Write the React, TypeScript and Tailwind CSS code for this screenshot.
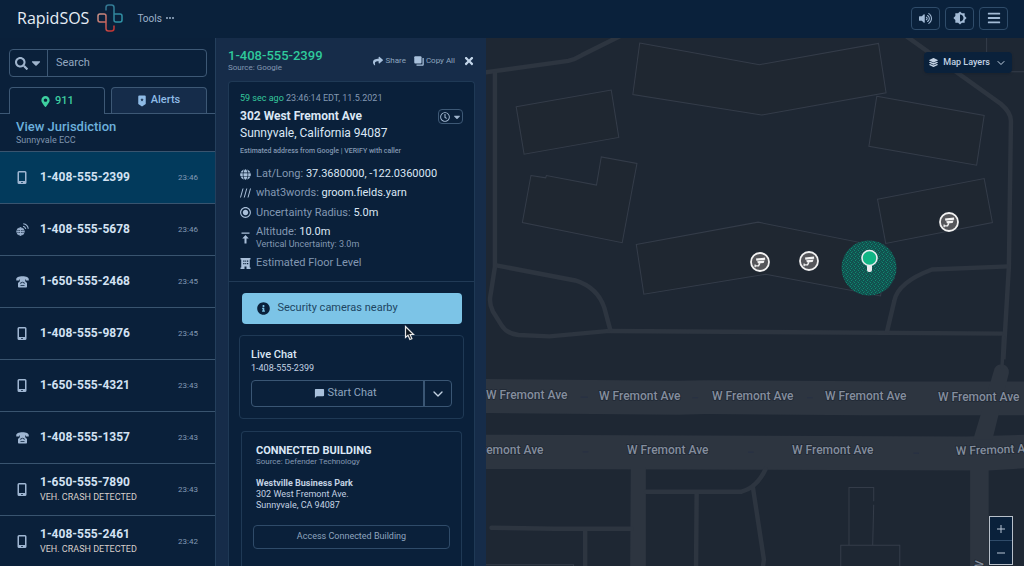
import { useState } from "react"
import {
  FaBars,
  FaCaretDown,
  FaGlobe,
  FaInfoCircle,
  FaLayerGroup,
  FaMapMarkerAlt,
  FaRegClock,
  FaSearch,
  FaShare,
  FaTimes,
  FaVolumeUp,
} from "react-icons/fa"
import { MdBrightness6, MdChatBubble, MdRadioButtonChecked } from "react-icons/md"
import { FiChevronDown } from "react-icons/fi"

type CallKind = "mobile" | "landline" | "voip"

type Call = {
  phone: string
  time: string
  kind: CallKind
  note?: string
}

const calls: Call[] = [
  { phone: "1-408-555-2399", time: "23:46", kind: "mobile" },
  { phone: "1-408-555-5678", time: "23:46", kind: "voip" },
  { phone: "1-650-555-2468", time: "23:45", kind: "landline" },
  { phone: "1-408-555-9876", time: "23:45", kind: "mobile" },
  { phone: "1-650-555-4321", time: "23:43", kind: "mobile" },
  { phone: "1-408-555-1357", time: "23:43", kind: "landline" },
  {
    phone: "1-650-555-7890",
    time: "23:43",
    kind: "mobile",
    note: "VEH. CRASH DETECTED",
  },
  {
    phone: "1-408-555-2461",
    time: "23:42",
    kind: "mobile",
    note: "VEH. CRASH DETECTED",
  },
]

const LogoMark = () => (
  <svg width="28" height="30" viewBox="0 0 28 30" fill="none" strokeWidth="1.500">
    <defs>
      <linearGradient id="warm" x1="0" y1="0" x2="1" y2="1">
        <stop offset="0" stopColor="#c9958a" />
        <stop offset="1" stopColor="#c3302f" />
      </linearGradient>
      <linearGradient id="cool" x1="0" y1="0" x2="1" y2="1">
        <stop offset="0" stopColor="#33748f" />
        <stop offset="1" stopColor="#2f95a8" />
      </linearGradient>
    </defs>
    <path
      stroke="url(#warm)"
      d="M10 19H4a2 2 0 0 1-2-2V13a2 2 0 0 1 2-2H8a2 2 0 0 1 2 2V25.500a2.500 2.500 0 0 0 2.500 2.500H15.500a2.500 2.500 0 0 0 2.500-2.500V22.500"
    />
    <path
      stroke="url(#cool)"
      d="M10 7.500V4.500A2.500 2.500 0 0 1 12.500 2H15.500a2.500 2.500 0 0 1 2.500 2.500V17a2 2 0 0 0 2 2H24a2 2 0 0 0 2-2V13a2 2 0 0 0-2-2H18"
    />
  </svg>
)

const MobileIcon = () => (
  <svg width="10" height="13" viewBox="0 0 20 26" fill="currentColor">
    <path
      fillRule="evenodd"
      d="M4 0h12a3 3 0 0 1 3 3v20a3 3 0 0 1-3 3H4a3 3 0 0 1-3-3V3a3 3 0 0 1 3-3zm0 3v17h12V3zm4.500 18.800v2h3v-2z"
    />
  </svg>
)

const LandlineIcon = () => (
  <svg width="13" height="12" viewBox="0 0 26 24" fill="currentColor">
    <path d="M13 0.500C5.500.5.500 3 .5 6v3h6.500V6.500h12V9H25.500V6c0-3-5-5.500-12.500-5.500z" />
    <path
      fillRule="evenodd"
      d="M8 6h10v4l4 4v7.500c0 1-.6 1.500-1.500 1.500h-15C4.600 23 4 22.500 4 21.500V14l4-4zm5 5.500c-2.500 0-4.500 1.800-4.500 4h1.800c0-1.300 1.200-2.300 2.700-2.300s2.700 1 2.700 2.300h1.800c0-2.200-2-4-4.500-4zM9 18.500v1.500h8v-1.500z"
    />
  </svg>
)

const VoipIcon = () => (
  <svg
    width="13"
    height="13"
    viewBox="0 0 26 26"
    fill="none"
    stroke="currentColor"
    strokeWidth="1.800"
  >
    <circle cx="9" cy="17" r="7.500" />
    <ellipse cx="9" cy="17" rx="3.500" ry="7.500" />
    <path d="M1.500 17h15M3 13h12M3 21h12M9 9.500v15" />
    <path d="M14 6.500a7 7 0 0 1 5.500 5.500M14.500 1.500a11.500 11.500 0 0 1 10 10" strokeWidth="2.200" />
  </svg>
)

const AlertTagIcon = () => (
  <svg width="8" height="12" viewBox="0 0 16 24" fill="currentColor">
    <path
      fillRule="evenodd"
      d="M2.500 1h11a2 2 0 0 1 2 2v15l-7.500 5-7.500-5V3a2 2 0 0 1 2-2zM8 6 7 8.500H4.500L6.500 10l-.8 2.800L8 11.200l2.300 1.600-.8-2.800 2-1.500H9z"
    />
  </svg>
)

const CopyIcon = () => (
  <svg width="10" height="10" viewBox="0 0 20 20" fill="currentColor">
    <rect x="0.500" y="0.500" width="14.500" height="14.500" rx="2" />
    <path d="M17 4h2.500v13.500a2 2 0 0 1-2 2H5V17h12z" />
  </svg>
)

const AltitudeIcon = () => (
  <svg width="9" height="12" viewBox="0 0 18 24" fill="currentColor">
    <path d="M1 1h16v2.500H1zM9 6l6.500 7H11v10H7V13H2.500z" />
  </svg>
)

const BuildingIcon = () => (
  <svg width="11" height="11" viewBox="0 0 22 22" fill="currentColor">
    <path
      fillRule="evenodd"
      d="M1 0h20v3h-1.500v16H21v3h-8v-5H9v5H1v-3h1.500V3H1zm5.500 5v2.500H9V5zm4 0v2.500h2V5zm3.500 0v2.500h2.500V5zm-7.500 5v2.500H9V10zm4 0v2.500h2V10zm3.500 0v2.500h2.500V10z"
    />
  </svg>
)

const SlashesIcon = () => (
  <svg width="11" height="10" viewBox="0 0 22 20" stroke="currentColor" strokeWidth="2">
    <path d="M1 19 6 1M8.500 19l5-18M16 19l5-18" />
  </svg>
)

const KindIcon = ({ kind }: { kind: CallKind }) => {
  if (kind === "landline") return <LandlineIcon />
  if (kind === "voip") return <VoipIcon />
  return <MobileIcon />
}

const headerButton =
  "flex h-[23px] w-[29px] items-center justify-center rounded border border-[#2f4c6a] text-[#a3bbd6]"

const Header = () => (
  <header className="flex h-[38px] shrink-0 items-center bg-[#0a213b] pr-4 pb-[2px] pl-[17px]">
    <span className="font-['Open_Sans'] text-[16px] text-[#e6edf5]">RapidSOS</span>
    <span className="ml-[7px]">
      <LogoMark />
    </span>
    <button className="ml-[13px] flex items-center gap-1 text-[10px] text-[#9db2ca]">
      Tools
      <svg width="8" height="2" viewBox="0 0 8 2" fill="currentColor">
        <circle cx="1" cy="1" r="1" />
        <circle cx="4" cy="1" r="1" />
        <circle cx="7" cy="1" r="1" />
      </svg>
    </button>
    <div className="ml-auto flex gap-[5px]">
      <button className={headerButton} aria-label="Volume">
        <FaVolumeUp size={13} />
      </button>
      <button className={headerButton} aria-label="Brightness">
        <MdBrightness6 size={14} />
      </button>
      <button className={headerButton} aria-label="Menu">
        <FaBars size={14} />
      </button>
    </div>
  </header>
)

const CallRow = ({
  call,
  active,
  onSelect,
}: {
  call: Call
  active: boolean
  onSelect: () => void
}) => (
  <li>
    <button
      onClick={onSelect}
      className={`flex h-[52px] w-full items-center border-t border-[#39546f] pr-[17px] pl-4 text-left ${
        active ? "bg-[#023a5c]" : ""
      }`}
    >
      <span className="flex w-3 shrink-0 justify-center text-[#9fb6d2]">
        <span className="shrink-0">
          <KindIcon kind={call.kind} />
        </span>
      </span>
      <span className="ml-3 flex-1">
        <span className="block text-[12px] leading-[15px] font-bold text-[#d3e2f3]">
          {call.phone}
        </span>
        {call.note && (
          <span className="block text-[9px] leading-[14px] text-[#d8cfca]">{call.note}</span>
        )}
      </span>
      <span className="text-[8px] text-[#8299b4]">{call.time}</span>
    </button>
  </li>
)

const Sidebar = () => {
  const [selected, setSelected] = useState(0)

  return (
    <aside className="flex w-[216px] shrink-0 flex-col overflow-hidden border-r border-[#243f5c] bg-[#0a203a]">
      <div className="mt-[11px] mr-2 ml-[9px] flex h-7 shrink-0 rounded border border-[#3d5875]">
        <button
          className="flex w-[38px] items-center justify-center gap-px border-r border-[#3d5875] text-[#9fb4cd]"
          aria-label="Search type"
        >
          <FaSearch size={13} />
          <FaCaretDown size={14} />
        </button>
        <input
          aria-label="Search"
          placeholder="Search"
          className="min-w-0 flex-1 px-2 text-[11px] text-[#dce9f8] outline-none placeholder:text-[#94a8c0]"
        />
      </div>

      <div className="mt-[10px] flex shrink-0 gap-[6px] border-b border-[#3d5875] pr-2 pl-[9px] text-[11px] font-medium">
        <button className="-mb-px flex h-[27px] flex-1 items-center justify-center gap-1 rounded-t border border-b-0 border-[#3d5875] bg-[#0a203a] text-[#3ecfa0]">
          <FaMapMarkerAlt size={11} />
          911
        </button>
        <button className="flex h-[26px] flex-1 items-center justify-center gap-[5px] rounded-t border border-b-0 border-[#3d5875] bg-[#152c4a] text-[#8fbbe6]">
          <AlertTagIcon />
          Alerts
        </button>
      </div>

      <div className="h-[37px] shrink-0 pt-[5px] pl-4">
        <a href="#jurisdiction" className="block text-[13px] leading-4 font-medium text-[#6cb0dc]">
          View Jurisdiction
        </a>
        <p className="text-[9px] leading-[10px] text-[#7f94ae]">Sunnyvale ECC</p>
      </div>

      <ul>
        {calls.map((call, i) => (
          <CallRow
            key={call.phone}
            call={call}
            active={i === selected}
            onSelect={() => setSelected(i)}
          />
        ))}
      </ul>
    </aside>
  )
}

const Fact = ({
  icon,
  label,
  value,
  children,
}: {
  icon: React.ReactNode
  label: string
  value?: string
  children?: React.ReactNode
}) => (
  <div className="flex items-center">
    <span className="flex w-[11px] shrink-0 justify-center text-[#a9bfd9]">{icon}</span>
    <div className="ml-[5px] text-[11px] leading-3 text-[#8398b2]">
      {label} {value && <span className="text-[#dbe7f5]">{value}</span>}
      {children}
    </div>
  </div>
)

const CallDetails = () => (
  <section className="flex w-[270px] shrink-0 flex-col overflow-hidden bg-[#162c49] pr-[11px] pl-3">
    <div className="flex h-[43px] shrink-0 items-center">
      <div className="pt-[3px]">
        <h1 className="text-[13px] leading-[14px] font-medium text-[#2fca9b]">1-408-555-2399</h1>
        <p className="text-[8px] leading-[10px] text-[#8398b2]">Source: Google</p>
      </div>
      <div className="ml-auto flex items-center gap-2 pt-[3px] text-[8px] text-[#8fa5bf]">
        <button className="flex items-center gap-[3px]">
          <FaShare size={10} className="text-[#a9c1dc]" />
          Share
        </button>
        <button className="flex items-center gap-[2px]">
          <span className="text-[#a9c1dc]">
            <CopyIcon />
          </span>
          Copy All
        </button>
        <button aria-label="Close" className="text-[#c3d6ea]">
          <FaTimes size={12} />
        </button>
      </div>
    </div>

    <div className="flex-1 rounded-t border border-b-0 border-[#1f3955] bg-[#0a203a]">
      <div className="border-b border-[#213a56] px-[11px] pt-[10px] pb-3">
        <p className="text-[9px] leading-3 text-[#8398b2]">
          <span className="text-[#35c89c]">59 sec ago</span> 23:46:14 EDT, 11.5.2021
        </p>
        <div className="mt-1 flex items-start justify-between">
          <h2 className="text-[12px] leading-[17px] text-[#dbe7f5]">
            <span className="block font-bold">302 West Fremont Ave</span>
            Sunnyvale, California 94087
          </h2>
          <button
            aria-label="Location history"
            className="mt-px flex h-[15px] w-[25px] items-center justify-center gap-[2px] rounded-sm border border-[#3d5875] text-[#9fb4cd]"
          >
            <FaRegClock size={10} />
            <FaCaretDown size={10} />
          </button>
        </div>
        <p className="mt-1 text-[7px] leading-[10px] font-medium text-[#8398b2]">
          Estimated address from Google | VERIFY with caller
        </p>

        <div className="mt-3 flex flex-col gap-[7px]">
          <Fact icon={<FaGlobe size={11} />} label="Lat/Long:" value="37.3680000, -122.0360000" />
          <Fact icon={<SlashesIcon />} label="what3words:" value="groom.fields.yarn" />
          <Fact
            icon={<MdRadioButtonChecked size={13} className="shrink-0" />}
            label="Uncertainty Radius:"
            value="5.0m"
          />
          <Fact icon={<AltitudeIcon />} label="Altitude:" value="10.0m">
            <p className="text-[9px]">Vertical Uncertainty: 3.0m</p>
          </Fact>
          <Fact icon={<BuildingIcon />} label="Estimated Floor Level" />
        </div>
      </div>

      <div className="px-[10px] pt-[11px]">
        <button className="mx-auto flex h-[31px] w-[220px] items-center gap-2 rounded bg-[#7cc4e7] pl-[15px] text-[11px] text-[#1d4663]">
          <FaInfoCircle size={13} className="text-[#0a213b]" />
          Security cameras nearby
        </button>

        <div className="mt-[11px] rounded border border-[#1f3955] px-[11px] pt-3 pb-[11px]">
          <h3 className="text-[11px] leading-[13px] font-medium text-[#dbe7f5]">Live Chat</h3>
          <p className="mt-px text-[9px] leading-3 text-[#c3d2e3]">1-408-555-2399</p>
          <div className="mt-[6px] flex h-[27px] rounded border border-[#3a5674] text-[#8fa5bf]">
            <button className="flex flex-1 items-center justify-center gap-[2px] border-r-2 border-[#3a5674] pl-4 text-[11px]">
              <MdChatBubble size={11} className="text-[#a9c1dc]" />
              Start Chat
            </button>
            <button aria-label="More chat options" className="flex w-[26px] items-center justify-center">
              <FiChevronDown size={16} className="text-[#c3d2e3]" />
            </button>
          </div>
        </div>

        <div className="mx-[2px] mt-3 rounded-t border border-b-0 border-[#1f3955] px-[11px] pt-3 pb-8">
          <div className="px-[3px]">
            <h3 className="text-[11px] leading-[14px] font-bold text-[#dbe7f5]">
              CONNECTED BUILDING
            </h3>
            <p className="text-[8px] leading-2 text-[#8398b2]">Source: Defender Technology</p>
            <address className="mt-3 text-[9px] leading-[11px] text-[#c3d2e3] not-italic">
              <strong>Westville Business Park</strong>
              <br />
              302 West Fremont Ave.
              <br />
              Sunnyvale, CA 94087
            </address>
          </div>
          <button className="mt-[14px] h-6 w-full rounded border border-[#2f4b69] text-[9px] text-[#8fa5bf]">
            Access Connected Building
          </button>
        </div>
      </div>
    </div>
  </section>
)

const northLabels = [
  { x: 0, y: 361 },
  { x: 113, y: 362 },
  { x: 226, y: 362 },
  { x: 339, y: 362 },
  { x: 452, y: 363 },
]

const southLabels = [
  { x: -24, y: 416 },
  { x: 141, y: 416 },
  { x: 306, y: 416 },
]

const cameras = [
  { x: 274, y: 224 },
  { x: 323, y: 223 },
  { x: 463, y: 184 },
]

const CameraPin = ({ x, y }: { x: number; y: number }) => (
  <g transform={`translate(${x} ${y})`}>
    <circle r="9" fill="#55565a" stroke="#f2f2f2" strokeWidth="1.800" />
    <g fill="#f4f4f4">
      <path d="M-4-3.400 5-4.400 5.200-2.200-3.600-1.200z" />
      <path d="M-2.800-.7 4.600-1.600 3.600 1-2 1.400z" />
      <path d="M-5.500 2.400h1.200v.9h2.300L-.8 1l1.300.4-1.500 3.100h-3.300v.8H-5.500z" />
    </g>
  </g>
)

const MapView = () => (
  <svg
    className="absolute inset-0 h-full w-full"
    viewBox="0 0 538 528"
    preserveAspectRatio="xMinYMin slice"
    fill="none"
  >
    <defs>
      <pattern id="dots" width="4" height="4" patternUnits="userSpaceOnUse">
        <rect width="4" height="4" fill="#12514f" />
        <rect width="1" height="1" fill="#0e8a71" />
        <rect x="2" y="1" width="1" height="1" fill="#0f7263" />
        <rect x="1" y="2" width="1" height="1" fill="#0e8a71" />
        <rect x="3" y="3" width="1" height="1" fill="#0f7263" />
      </pattern>
    </defs>

    {/* campus: buildings and driveways */}
    <g transform="translate(0 -8) scale(0.3431)">
      <g stroke="#343c49" strokeWidth="3" fill="#1f2731">
        <path d="M448 38 797 101 1144 39 1166 183 803 248 428 188Z" />
        <path d="M88 224 365 175 387 313 111 362Z" />
        <path d="M131 424 174 431 176 424 322 452 336 370 440 389 397 620 106 561Z" />
        <path d="M438 625 793 560 1168 635 1150 775 815 712 460 770Z" />
        <path d="M1139 193 1452 249 1430 394 1116 339Z" />
        <path d="M1141 493 1452 433 1476 561 1165 622Z" />
        <path d="M1459 20V122H1570" fill="none" />
      </g>
      <g stroke="#2d3540" strokeWidth="13">
        <path d="M-5 124 240 90Q260 85 280 73L390 18" />
        <path d="M26 122V690L12 780Q10 800 20 820L45 860Q60 885 95 889L185 893 360 877 1512 885" />
        <path d="M30 686 260 730Q325 750 345 810L363 877" />
        <path d="M1225 18 1500 215Q1530 240 1530 265L1524 690 1508 960" />
        <path d="M1524 689 1300 698Q1200 735 1190 790L1168 882" />
      </g>
    </g>

    {/* W Fremont Ave and the streets south of it */}
    <g transform="translate(0 302) scale(0.3431)">
      <g fill="#2d3540">
        <path d="M0 114 560 119 640 117 1200 121H1570V219H1100L640 216 560 218 0 213Z" />
        <path d="M0 276 800 279 1400 281 1570 276V374L1464 380 0 376Z" />
        <path d="M422 370H466V690H420ZM1411 370H1465V690H1411Z" />
        <path d="M1480 90a22 22 0 0 1 44 6L1476 290H1420Z" />
      </g>
      <g stroke="#2d3540" strokeWidth="13" strokeLinecap="round">
        <path d="M1508-10 1504 80" strokeWidth="10" />
        <path d="M16 547 200 550H425M289 552V690" />
        <path d="M466 442H745Q790 430 815 376M614 445 612 690M778 430 810 640 803 690" />
      </g>
      <g stroke="#343c49" strokeWidth="3">
        <path d="M1058 598V430H1130V470M1130 480 1127 598M1034 690V598H1206V690M0 655H255V690" />
      </g>
      <g stroke="#283142" strokeWidth="4">
        <path d="M297 167H276M618 168H602M952 168H936M282 326H298M764 327H780M1246 330H1262" />
      </g>
    </g>

    <g
      fontFamily="Roboto, sans-serif"
      fontSize="12"
      fontWeight="500"
      fill="#858e9d"
      stroke="#1f2834"
      strokeWidth="1.500"
      paintOrder="stroke"
    >
      {[...northLabels, ...southLabels].map(p => (
        <text key={`${p.x}-${p.y}`} x={p.x} y={p.y}>
          W Fremont Ave
        </text>
      ))}
      <text transform="translate(470 417) rotate(-2)">W Fremont Ave</text>
      <text transform="translate(496 534) rotate(-80)">W</text>
    </g>

    <circle cx="383" cy="230" r="27.500" fill="url(#dots)" />
    <rect x="381" y="225" width="5" height="9" rx="2" fill="#e9edf0" />
    <circle cx="383.500" cy="220" r="7.500" fill="#10b585" stroke="#e9edf0" strokeWidth="1.600" />
    {cameras.map(c => (
      <CameraPin key={c.x} x={c.x} y={c.y} />
    ))}
  </svg>
)

export default function App() {
  return (
    <div className="relative flex h-screen flex-col overflow-hidden bg-[#0a213b] font-[Roboto,sans-serif]">
      <Header />
      <div className="flex min-h-0 flex-1">
        <Sidebar />
        <CallDetails />
        <main className="relative min-w-0 flex-1 overflow-hidden bg-[#1e2733]">
          <MapView />
          <button className="absolute top-[14px] right-3 flex h-[21px] items-center rounded-sm bg-[#0a213b] px-[5px] text-[9px] font-medium text-[#c3d2e3] shadow">
            <FaLayerGroup size={9} />
            <span className="mx-[5px]">Map Layers</span>
            <FiChevronDown size={12} />
          </button>
          <div className="absolute right-[11px] bottom-px flex w-6 flex-col border border-[#b8c0ca] bg-[#0a213b] text-[#b8c6d6]">
            <button
              aria-label="Zoom in"
              className="flex h-6 items-center justify-center border-b border-[#2f4b69]"
            >
              <svg width="8" height="8" viewBox="0 0 8 8" stroke="currentColor">
                <path d="M0 4h8M4 0v8" />
              </svg>
            </button>
            <button aria-label="Zoom out" className="flex h-[23px] items-center justify-center">
              <svg width="8" height="8" viewBox="0 0 8 8" stroke="currentColor">
                <path d="M0 4h8" />
              </svg>
            </button>
          </div>
        </main>
      </div>

      {/* mouse pointer */}
      <svg
        className="pointer-events-none absolute top-[325px] left-[404px]"
        width="11"
        height="16"
        viewBox="0 0 11 16"
      >
        <path
          d="M1.500 1.500v11l2.500-2.300 1.900 4.300 2-.9-1.800-4.100H9.500z"
          fill="#101820"
          stroke="#e8e8e8"
          strokeWidth="1.200"
        />
      </svg>
    </div>
  )
}
